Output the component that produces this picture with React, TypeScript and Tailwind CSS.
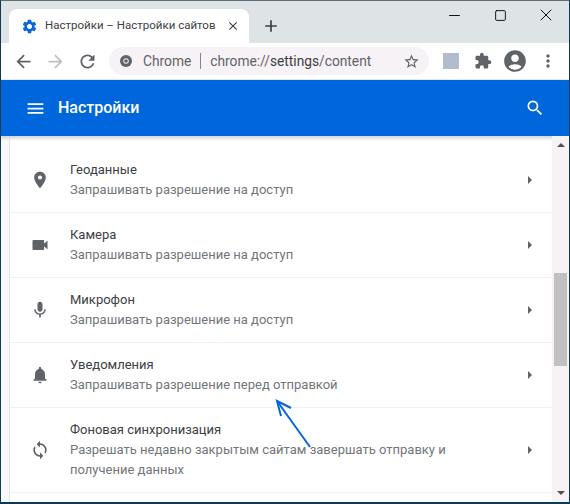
import {
  MdLocationOn, MdVideocam, MdMic, MdNotifications, MdSync, MdExtension, MdAccountCircle, MdSettings,
  MdMenu, MdSearch, MdArrowBack, MdArrowForward, MdRefresh, MdStarBorder, MdMoreVert, MdClose, MdAdd,
} from 'react-icons/md';
import { Minus, Square, X } from 'lucide-react';
import type { ReactNode } from 'react';

const rows: { icon: ReactNode; title: string; sub: string; sub2?: string }[] = [
  { icon: <MdLocationOn size={20} />, title: 'Геоданные', sub: 'Запрашивать разрешение на доступ' },
  { icon: <MdVideocam size={20} />, title: 'Камера', sub: 'Запрашивать разрешение на доступ' },
  { icon: <MdMic size={20} />, title: 'Микрофон', sub: 'Запрашивать разрешение на доступ' },
  { icon: <MdNotifications size={20} />, title: 'Уведомления', sub: 'Запрашивать разрешение перед отправкой' },
  {
    icon: <MdSync size={20} />,
    title: 'Фоновая синхронизация',
    sub: 'Разрешать недавно закрытым сайтам завершать отправку и',
    sub2: 'получение данных',
  },
];

function Row({ icon, title, sub, sub2 }: (typeof rows)[number]) {
  return (
    <div className={`flex shrink-0 items-center border-b border-[#f3eff2] ${sub2 ? 'h-[85px]' : 'h-[65px]'}`}>
      <div className="flex w-[60px] shrink-0 justify-center text-[#5f6368]">{icon}</div>
      <div className="flex-1">
        <div className="h-5 text-[13px] leading-5 text-[#3c4043]">{title}</div>
        <div className="h-5 text-[13px] leading-5 text-[#72767a]">{sub}</div>
        {sub2 && <div className="h-5 text-[13px] leading-5 text-[#72767a]">{sub2}</div>}
      </div>
      <div className="mr-[20px] h-0 w-0 border-y-[4px] border-l-[4px] border-y-transparent border-l-[#5f6368]" />
    </div>
  );
}

export default function App() {
  return (
    <div className="relative h-[504px] w-[570px] overflow-hidden border-x border-b-2 border-t border-[#0f3a56] border-t-[#5f6b73] bg-white font-['Roboto',sans-serif]">
      {/* tab strip */}
      <div className="flex h-[42px] items-end bg-[#dee3e6]">
        <div className="ml-[8px] flex h-[34px] w-[240px] items-center rounded-t-lg bg-white pl-[12px] pr-[9px]">
          <MdSettings size={17} className="text-[#0b66d8]" />
          <span className="ml-[7px] flex-1 whitespace-nowrap text-[11.5px] text-[#3c4043]">Настройки – Настройки сайтов</span>
          <MdClose size={14} className="text-[#3c4043]" />
        </div>
        <MdAdd size={20} className="mb-[7px] ml-[12px] text-[#3c4043]" />
        <div className="mb-[18px] ml-auto flex items-center pr-[13px] text-[#111]">
          <Minus size={17} strokeWidth={1.4} />
          <Square size={13} strokeWidth={1.8} className="ml-[31px]" />
          <X size={20} strokeWidth={1.2} className="ml-[29px]" />
        </div>
      </div>
      {/* toolbar */}
      <div className="flex h-[37px] items-center border-b border-[#e8e8e8] bg-white">
        <MdArrowBack size={21} className="ml-[12px] text-[#5f6368]" />
        <MdArrowForward size={21} className="ml-[11px] text-[#bdc1c6]" />
        <MdRefresh size={21} className="ml-[11px] text-[#5f6368]" />
        <div className="ml-[11px] flex h-[28px] w-[320px] items-center rounded-full bg-[#f7f2f6] pl-[11px] text-[13.75px]">
          <svg width="12" height="12" viewBox="0 0 24 24" className="shrink-0">
            <circle cx="12" cy="12" r="12" fill="#5f6368" />
            <circle cx="12" cy="12" r="5.5" fill="#f7f2f6" />
            <circle cx="12" cy="12" r="3.6" fill="#5f6368" />
          </svg>
          <span className="ml-[11px] text-[#5f6368]">Chrome</span>
          <span className="ml-[9px] mr-[9px] h-[16px] w-px bg-[#80868b]" />
          <span className="text-[#5f6368]">
            chrome://<span className="text-[#3c4043]">settings</span>/content
          </span>
          <MdStarBorder size={17} className="ml-auto mr-[9px] text-[#5f6368]" />
        </div>
        <div className="ml-[14px] h-4 w-4 bg-[#b3bccf]" />
        <MdExtension size={18} className="ml-[15px] text-[#5f6368]" />
        <MdAccountCircle size={26} className="ml-[10px] text-[#5f6368]" />
        <MdMoreVert size={20} className="ml-[10px] text-[#5f6368]" />
      </div>
      {/* header */}
      <div className="flex h-[56px] items-center bg-[#0066db] text-white">
        <MdMenu size={21} className="ml-[24px]" />
        <span className="ml-[12px] text-[16px] font-medium">Настройки</span>
        <MdSearch size={20} className="ml-auto mr-[24px]" />
      </div>
      {/* content */}
      <div className="flex h-[366px]">
        <div className="relative flex w-[551px] bg-[#f8f9fa] pl-[8px]">
          <div className="absolute inset-x-0 top-0 h-[5px] bg-gradient-to-b from-[#d4d4d4] to-transparent" />
          <div className="flex w-[543px] flex-col overflow-hidden border-l border-[#e4e4e4] bg-white pt-[12px]">
            {rows.map((r) => (
              <Row key={r.title} {...r} />
            ))}
          </div>
        </div>
        {/* scrollbar */}
        <div className="flex flex-1 flex-col items-center bg-[#f7f2f6]">
          <div className="mt-[7px] h-0 w-0 border-x-[4px] border-b-[4px] border-x-transparent border-b-[#505050]" />
          <div className="mt-[126px] h-[93px] w-[13px] bg-[#c2c0c2]" />
          <div className="mt-auto mb-[7px] h-0 w-0 border-x-[4px] border-t-[4px] border-x-transparent border-t-[#505050]" />
        </div>
      </div>
      {/* annotation arrow */}
      <svg className="absolute left-[-1px] top-[-1px]" width="570" height="504" fill="none" stroke="#0066db" strokeWidth="2">
        <path d="M310 447 L277 401" />
        <path d="M291 408 L277 401 L281 416" />
      </svg>
    </div>
  );
}
